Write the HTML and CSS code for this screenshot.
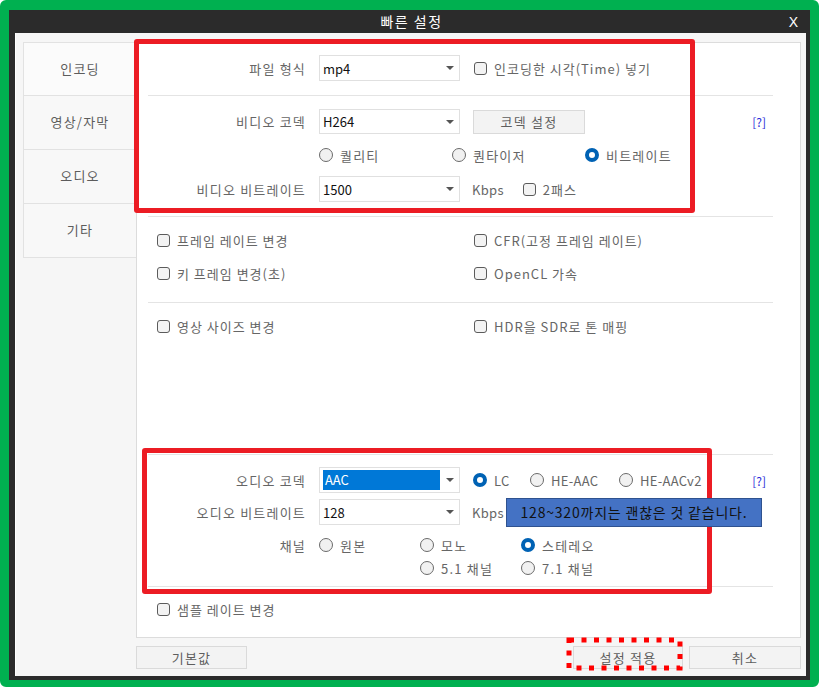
FILE: index.html
```html
<!DOCTYPE html>
<html>
<head>
  <meta charset="UTF-8" />
  <link rel="stylesheet" href="styles.css">
</head>
<body>
  <div class="frame">
    <div class="titlebar">
      <span></span>
      <span class="title">빠른 설정</span>
      <span class="close">X</span>
    </div>

    <div class="window">
      <div class="tabs">
        <div class="tab tab-active">인코딩</div>
        <div class="tab">영상/자막</div>
        <div class="tab">오디오</div>
        <div class="tab">기타</div>
      </div>

      <div class="panel">
        <div class="sec sec-format">
          <div class="row">
            <div class="lbl">파일 형식</div>
            <div class="select"><span>mp4</span><i class="arrow"></i></div>
            <label class="chk chk-after"><span class="box"></span>인코딩한 시각(Time) 넣기</label>
          </div>
        </div>

        <div class="sec sec-video">
          <div class="row row-25">
            <div class="lbl">비디오 코덱</div>
            <div class="select"><span>H264</span><i class="arrow"></i></div>
            <button class="btn btn-codec">코덱 설정</button>
            <span class="help">[?]</span>
          </div>
          <div class="radios radios-mode">
            <label class="radio"><span class="dot"></span>퀄리티</label>
            <label class="radio"><span class="dot"></span>퀀타이저</label>
            <label class="radio"><span class="dot dot-on"></span>비트레이트</label>
          </div>
          <div class="row">
            <div class="lbl">비디오 비트레이트</div>
            <div class="select"><span>1500</span><i class="arrow"></i></div>
            <span class="unit">Kbps</span>
            <label class="chk chk-pass"><span class="box"></span>2패스</label>
          </div>
        </div>

        <div class="sec sec-frame">
          <div class="checks">
            <label class="chk"><span class="box"></span>프레임 레이트 변경</label>
            <label class="chk"><span class="box"></span>CFR(고정 프레임 레이트)</label>
            <label class="chk"><span class="box"></span>키 프레임 변경(초)</label>
            <label class="chk"><span class="box"></span>OpenCL 가속</label>
          </div>
        </div>

        <div class="sec sec-size">
          <div class="checks">
            <label class="chk"><span class="box"></span>영상 사이즈 변경</label>
            <label class="chk"><span class="box"></span>HDR을 SDR로 톤 매핑</label>
          </div>
        </div>

        <div class="sec sec-audio">
          <div class="row">
            <div class="lbl">오디오 코덱</div>
            <div class="select"><span class="picked">AAC</span><i class="arrow"></i></div>
            <div class="radios radios-aac">
              <label class="radio"><span class="dot dot-on"></span>LC</label>
              <label class="radio"><span class="dot"></span>HE-AAC</label>
              <label class="radio"><span class="dot"></span>HE-AACv2</label>
            </div>
            <span class="help">[?]</span>
          </div>
          <div class="row row-gap">
            <div class="lbl">오디오 비트레이트</div>
            <div class="select"><span>128</span><i class="arrow"></i></div>
            <span class="unit">Kbps</span>
          </div>
          <div class="channels">
            <div class="lbl">채널</div>
            <label class="radio"><span class="dot"></span>원본</label>
            <label class="radio"><span class="dot"></span>모노</label>
            <label class="radio"><span class="dot dot-on"></span>스테레오</label>
            <span></span>
            <span></span>
            <label class="radio"><span class="dot"></span>5.1 채널</label>
            <label class="radio"><span class="dot"></span>7.1 채널</label>
          </div>
        </div>

        <div class="sec sec-sample">
          <label class="chk"><span class="box"></span>샘플 레이트 변경</label>
        </div>
      </div>

      <div class="buttons">
        <button class="btn btn-default">기본값</button>
        <button class="btn btn-apply">설정 적용</button>
        <button class="btn btn-cancel">취소</button>
      </div>
    </div>
  </div>

  <!-- annotations drawn over the screenshot -->
  <div class="mark mark-video"></div>
  <div class="mark mark-audio"></div>
  <svg class="mark-dots" width="120" height="36" viewBox="0 0 120 36">
    <rect x="3" y="3" width="111" height="28" fill="none" stroke="#ff0000" stroke-width="5" stroke-dasharray="5 7.5"/>
  </svg>
  <div class="note">128~320까지는 괜찮은 것 같습니다.</div>
</body>
</html>
```

FILE: styles.css
```css
* {
  box-sizing: border-box;
}

body {
  margin: 0;
  width: 819px;
  height: 687px;
  position: relative;
  background: #ffffff;
  font-family: "Noto Sans CJK KR", "Noto Sans", sans-serif;
  font-size: 13px;
  letter-spacing: 1.2px;
  color: #666666;
}

.frame {
  width: 819px;
  height: 687px;
  border: 9px solid #00b050;
  border-top-width: 10px;
  border-bottom-width: 7px;
  border-radius: 6px;
  background: #2b2b2b;
  padding: 0 4px 4px 6px;
  display: flex;
  flex-direction: column;
}

.titlebar {
  height: 23px;
  display: grid;
  grid-template-columns: 1fr auto 1fr;
  align-items: center;
  color: #ffffff;
}

.title {
  font-size: 14px;
  line-height: 23px;
  letter-spacing: 1.5px;
  margin-left: 2px;
}

.close {
  justify-self: end;
  margin-right: 8px;
  font-family: "Liberation Sans", sans-serif;
  font-size: 14px;
  letter-spacing: 0;
}

.window {
  flex: 1;
  background: #f6f6f6;
  border-left: 1px solid #ffffff;
  display: grid;
  grid-template-columns: 113px 665px;
  grid-template-rows: 596px 23px;
  row-gap: 8px;
  padding: 9px 5px 7px 7px;
}

.tabs {
  display: flex;
  flex-direction: column;
}

.tab {
  height: 55px;
  margin-top: -1px;
  border: 1px solid #e2e2e2;
  border-right: none;
  background: #f8f8f8;
  display: flex;
  align-items: center;
  justify-content: center;
  padding-bottom: 2px;
  color: #5c5c5c;
}

.tab:first-child {
  margin-top: 0;
  height: 54px;
}

.tab-active {
  background: #fbfbfb;
}

.panel {
  background: #ffffff;
  border: 1px solid #dcdcdc;
  padding: 0 27px 0 11px;
  display: flex;
  flex-direction: column;
}

.sec {
  border-bottom: 1px solid #e4e4e4;
}

.sec-format {
  height: 53px;
  padding-top: 12px;
}

.sec-video {
  height: 121px;
  padding-top: 13px;
}

.sec-frame {
  height: 86px;
  padding-top: 13px;
}

.sec-size {
  height: 152px;
  padding-top: 13px;
}

.sec-audio {
  height: 132px;
  padding-top: 12px;
}

.sec-sample {
  flex: 1;
  border-bottom: none;
  padding: 12px 0 0 9px;
}

.row {
  height: 26px;
  display: flex;
  align-items: center;
}

.row-25 {
  height: 25px;
}

.row-gap {
  margin-top: 6px;
}

.lbl {
  width: 158px;
  margin-right: 13px;
  text-align: right;
  white-space: nowrap;
}

.select {
  width: 141px;
  height: 100%;
  border: 1px solid #e0e0e0;
  background: #ffffff;
  display: flex;
  align-items: center;
  justify-content: space-between;
  padding: 0 5px 0 3px;
  color: #111111;
  letter-spacing: 0;
  flex-shrink: 0;
}

.picked {
  width: 117px;
  height: 20px;
  line-height: 20px;
  background: #0078d7;
  color: #ffffff;
  padding-left: 2px;
}

.arrow {
  width: 0;
  height: 0;
  border-left: 4px solid transparent;
  border-right: 4px solid transparent;
  border-top: 4px solid #555555;
}

.chk {
  display: flex;
  align-items: center;
  gap: 7px;
  height: 20px;
  white-space: nowrap;
  letter-spacing: 1px;
}

.chk-after {
  margin-left: 14px;
}

.chk-pass {
  margin-left: 19px;
}

.box {
  width: 13px;
  height: 13px;
  border: 1px solid #5b5b5b;
  border-radius: 3px;
  background: #f3f3f3;
  flex-shrink: 0;
}

.checks {
  display: grid;
  grid-template-columns: 317px auto;
  row-gap: 13px;
  padding-left: 9px;
}

.radio {
  display: flex;
  align-items: center;
  gap: 7px;
  height: 18px;
  white-space: nowrap;
}

.dot {
  width: 14px;
  height: 14px;
  border: 1px solid #6a6a6a;
  border-radius: 50%;
  background: #f1f1f1;
  flex-shrink: 0;
}

.dot-on {
  border: 4.5px solid #0062b4;
  background: #ffffff;
}

.radios {
  display: flex;
}

.radios-mode {
  height: 42px;
  align-items: center;
  padding-left: 171px;
}

.radios-mode .radio {
  width: 133px;
}

.radios-aac {
  margin-left: 13px;
  letter-spacing: 0.3px;
}

.radios-aac .radio:nth-child(1) {
  width: 57px;
}

.radios-aac .radio:nth-child(2) {
  width: 89px;
}

.channels {
  display: grid;
  grid-template-columns: 171px 101px 101px auto;
  row-gap: 4px;
  margin-top: 11px;
}

.channels .lbl {
  width: 158px;
}

.unit {
  margin-left: 12px;
  letter-spacing: 0.3px;
}

.help {
  margin-left: auto;
  margin-right: 7px;
  color: #2b2bd8;
  font-size: 12px;
  letter-spacing: 0;
}

.btn {
  font-family: inherit;
  font-size: 13px;
  letter-spacing: 1.2px;
  color: #5e5e5e;
  background: #f3f3f3;
  border: 1px solid #dadada;
  padding: 0;
  height: 23px;
}

.btn-codec {
  width: 112px;
  height: 24px;
  margin-left: 13px;
}

.buttons {
  grid-column: 2;
  display: flex;
  gap: 6px;
}

.btn-default {
  width: 111px;
  margin-right: auto;
}

.btn-apply {
  width: 110px;
}

.btn-cancel {
  width: 112px;
}

.mark {
  position: absolute;
  border: 5px solid #ec1c24;
  border-radius: 3px;
}

.mark-video {
  left: 134px;
  top: 39px;
  width: 561px;
  height: 174px;
}

.mark-audio {
  left: 142px;
  top: 448px;
  width: 570px;
  height: 146px;
}

.mark-dots {
  position: absolute;
  left: 566px;
  top: 637px;
}

.note {
  position: absolute;
  left: 506px;
  top: 498px;
  width: 256px;
  height: 29px;
  background: #4472c4;
  border: 1px solid #2f528f;
  color: #111111;
  text-align: center;
  line-height: 27px;
  font-size: 14px;
  letter-spacing: 0.8px;
}
```
